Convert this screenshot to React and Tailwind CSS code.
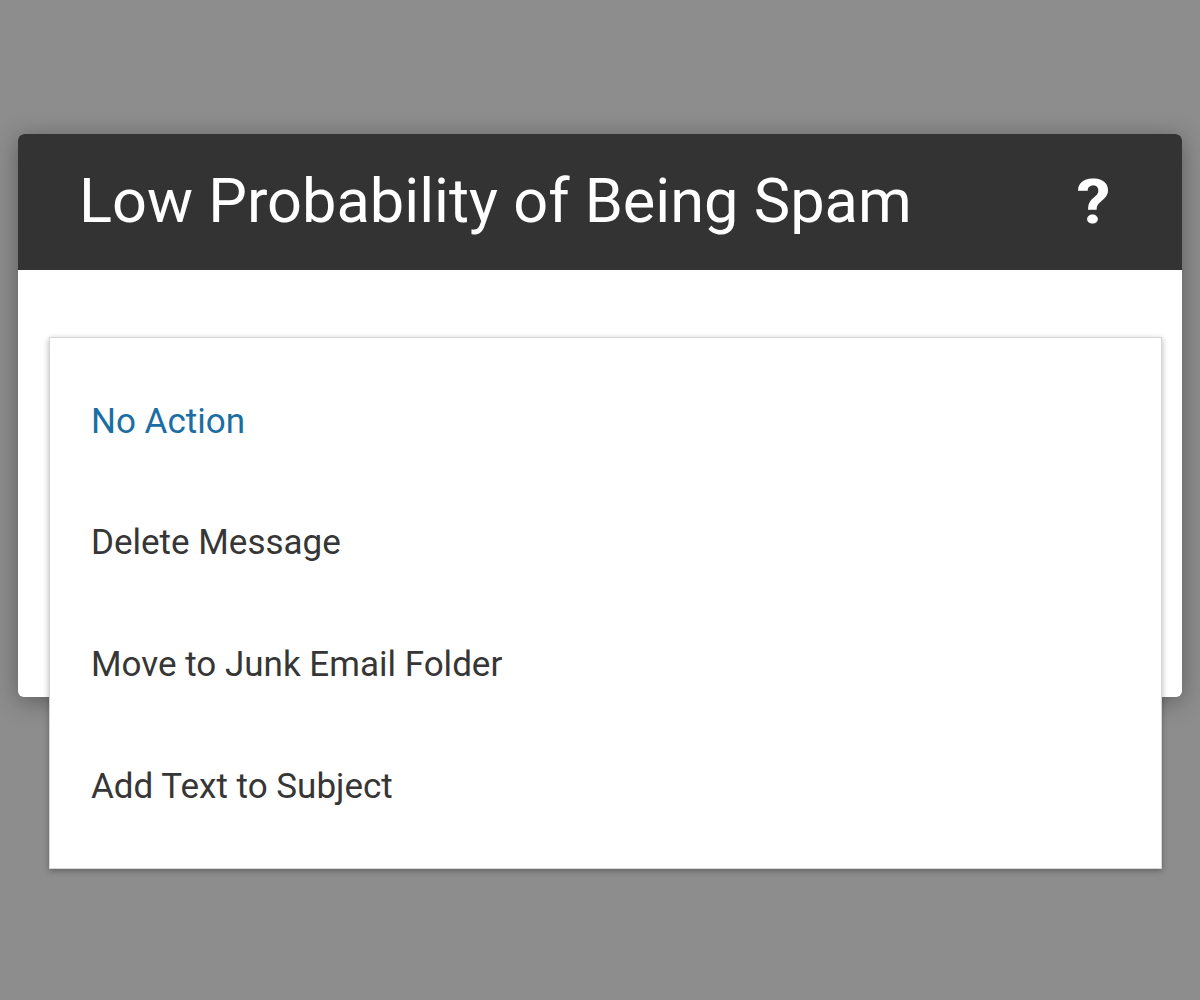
export default function App() {
  const items = ["No Action", "Delete Message", "Move to Junk Email Folder", "Add Text to Subject"];
  return (
    <div className="w-[1200px] h-[1000px] bg-[#8d8d8d] overflow-hidden pt-[134px] px-[18px]" style={{ fontFamily: "Roboto, 'Open Sans', sans-serif" }}>
      <div className="relative h-[563px] bg-white rounded-[6px] shadow-[0_4px_24px_rgba(0,0,0,0.35)]">
        <div className="h-[136px] bg-[#333333] rounded-t-[6px] flex items-center justify-between pl-[61px] pr-[73px]">
          <h1 className="text-white text-[61.3px] leading-none font-normal">Low Probability of Being Spam</h1>
          <span className="text-white text-[62px] font-bold leading-none scale-x-110">?</span>
        </div>
        <div className="absolute left-[31px] top-[203px] w-[1113px] bg-white border border-[#d6d6d6] shadow-[0_2px_6px_rgba(0,0,0,0.3)] pt-[23px] pb-[20px]">
          {items.map((t, i) => (
            <div key={t} className={`h-[121.8px] flex items-center pl-[41px] text-[35px] ${i === 0 ? "text-[#1b6ea3]" : "text-[#363636]"}`}>
              {t}
            </div>
          ))}
        </div>
      </div>
    </div>
  );
}
